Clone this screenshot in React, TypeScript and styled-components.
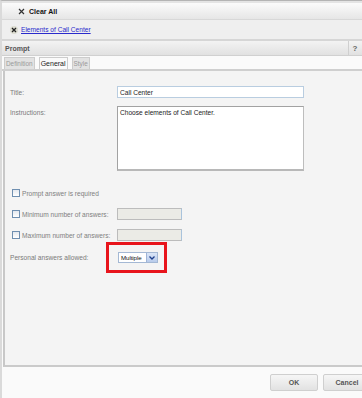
import styled, { createGlobalStyle } from "styled-components";

const GlobalStyle = createGlobalStyle`
  html, body {
    margin: 0;
    padding: 0;
    background: #ffffff;
  }
  body {
    font-family: "Liberation Sans", Arial, sans-serif;
    font-size: 6.6px;
  }
`;

const Frame = styled.div`
  width: 362px;
  height: 398px;
  overflow: hidden;
  box-sizing: border-box;
  border-top: 1px solid #b4b4b4;
  border-left: 2px solid #dadada;
  display: flex;
  flex-direction: column;
  background: #fafafa;
`;

const Toolbar = styled.div`
  height: 16px;
  display: flex;
  align-items: center;
  padding-left: 15px;
  gap: 4px;
  background: linear-gradient(#fbfbfb, #e6e6e6);
  border-top: 2px solid #e4e4e4;
  border-bottom: 1px solid #d8d8d8;
`;

const ClearText = styled.span`
  font-weight: bold;
  font-size: 7px;
  color: #111;
`;

const SquareX = styled.span`
  width: 8px;
  height: 8px;
  display: flex;
  align-items: center;
  justify-content: center;
`;

const SelectionRow = styled.div`
  height: 19px;
  display: flex;
  align-items: center;
  gap: 3px;
  padding-left: 8px;
  background: #efefef;
  border-bottom: 2px solid #d6d6d6;
`;

const RoundX = styled.span`
  width: 8px;
  height: 8px;
  border-radius: 50%;
  background: #dcdcd0;
  display: flex;
  align-items: center;
  justify-content: center;
`;

const Link = styled.a`
  color: #2a2acc;
  text-decoration: underline;
  cursor: pointer;
`;

const PromptHeader = styled.div`
  height: 14px;
  display: flex;
  align-items: center;
  justify-content: space-between;
  padding-left: 3px;
  background: linear-gradient(#f3f3f3, #e1e1e1);
  border-bottom: 1px solid #d0d0d0;
`;

const PromptTitle = styled.span`
  font-weight: bold;
  font-size: 7px;
  color: #555;
`;

const Help = styled.span`
  height: 100%;
  width: 12px;
  border-left: 1px solid #cfcfcf;
  display: flex;
  align-items: center;
  justify-content: center;
  font-weight: bold;
  font-size: 8px;
  color: #666;
  margin-right: 1px;
`;

const TabStrip = styled.div`
  height: 13px;
  display: flex;
  align-items: flex-end;
  gap: 4px;
  padding-left: 2px;
  background: #fafafa;
  border-bottom: 2px solid #cfcfcf;
`;

const Tab = styled.div<{ $active?: boolean }>`
  height: 12px;
  padding: 0 1px;
  display: flex;
  align-items: center;
  box-sizing: border-box;
  border: 1px solid #cccccc;
  border-bottom: none;
  background: ${(p) => (p.$active ? "#fafafa" : "#e2e2e2")};
  color: ${(p) => (p.$active ? "#222" : "#9a9a9a")};
  font-size: ${(p) => (p.$active ? "7px" : "6.4px")};
`;

const Panel = styled.div`
  height: 296px;
  margin-left: 1px;
  box-sizing: border-box;
  border-left: 2px solid #c8c8c8;
  border-bottom: 2px solid #cacaca;
  background: #f4f4f4;
  padding-top: 15px;
  display: flex;
  flex-direction: column;
`;

const Row = styled.div<{ $h: number; $mt?: number; $top?: boolean }>`
  height: ${(p) => p.$h}px;
  margin-top: ${(p) => p.$mt ?? 0}px;
  display: flex;
  align-items: ${(p) => (p.$top ? "flex-start" : "center")};
`;

const Label = styled.div<{ $pt?: number }>`
  width: 112px;
  flex: none;
  color: #7a7a7a;
  padding-top: ${(p) => p.$pt ?? 0}px;
  padding-left: 5px;
  box-sizing: border-box;
`;

const TextInput = styled.div`
  width: 187px;
  height: 12px;
  box-sizing: border-box;
  border: 1px solid #b9cde0;
  background: #ffffff;
  color: #222;
  padding-left: 2px;
  display: flex;
  align-items: center;
`;

const TextArea = styled.div`
  width: 187px;
  height: 65px;
  box-sizing: border-box;
  border: 1px solid #a2a2a2;
  border-right-color: #bdbdbd;
  border-bottom: 2px solid #b8b8b8;
  background: #ffffff;
  color: #222;
  padding: 2px 2px;
`;

const CheckLabel = styled.label`
  width: 112px;
  flex: none;
  display: flex;
  align-items: center;
  gap: 2px;
  padding-left: 7px;
  box-sizing: border-box;
  color: #808080;
  white-space: nowrap;
`;

const Box = styled.span`
  width: 8px;
  height: 8px;
  flex: none;
  box-sizing: border-box;
  border: 1px solid #6f8fb0;
  background: linear-gradient(#e4e8ee, #ffffff);
`;

const DisabledInput = styled.div`
  width: 65px;
  height: 12px;
  box-sizing: border-box;
  border: 1px solid #bcbcbc;
  border-right-color: #a9c3dc;
  background: #ebebe6;
`;

const Highlight = styled.div`
  position: relative;
  margin-left: 1px;
  display: flex;
  align-items: center;

  &::after {
    content: "";
    position: absolute;
    left: -12px;
    top: -10px;
    width: 61px;
    height: 31px;
    box-sizing: border-box;
    border: 3px solid #e8141c;
  }
`;

const Select = styled.div`
  width: 40px;
  height: 11px;
  box-sizing: border-box;
  border: 1px solid #a4b8d4;
  background: #ffffff;
  display: flex;
  align-items: center;
  justify-content: space-between;
  padding-left: 2px;
  color: #111;
  font-size: 6.2px;
  letter-spacing: -0.1px;
`;

const SelectArrow = styled.span`
  width: 10px;
  height: 9px;
  background: linear-gradient(#dbe6f7, #b8cbeb);
  border-left: 1px solid #9fb4d6;
  display: flex;
  align-items: center;
  justify-content: center;
`;

const Footer = styled.div`
  flex: 1;
  display: flex;
  justify-content: flex-end;
  align-items: flex-start;
  padding-top: 7px;
  gap: 5px;
  background: #fafafa;
`;

const Button = styled.button<{ $clip?: boolean }>`
  width: 48px;
  height: 17px;
  flex: none;
  margin-right: ${(p) => (p.$clip ? "-9px" : "0")};
  border: 1px solid #cfcfcf;
  border-radius: 2px;
  background: linear-gradient(#f6f6f6, #e2e2e2);
  font-family: "Liberation Sans", Arial, sans-serif;
  font-size: 7px;
  font-weight: bold;
  color: #555;
  padding: 0;
`;

export default function App() {
  return (
    <>
      <GlobalStyle />
      <Frame>
        <Toolbar>
          <SquareX>
            <svg width="7" height="7" viewBox="0 0 7 7">
              <path d="M1 1L6 6M6 1L1 6" stroke="#333" strokeWidth="1.2" />
            </svg>
          </SquareX>
          <ClearText>Clear All</ClearText>
        </Toolbar>
        <SelectionRow>
          <RoundX>
            <svg width="6" height="6" viewBox="0 0 6 6">
              <path d="M1 1L5 5M5 1L1 5" stroke="#222" strokeWidth="1.3" />
            </svg>
          </RoundX>
          <Link>Elements of Call Center</Link>
        </SelectionRow>
        <PromptHeader>
          <PromptTitle>Prompt</PromptTitle>
          <Help>?</Help>
        </PromptHeader>
        <TabStrip>
          <Tab>Definition</Tab>
          <Tab $active>General</Tab>
          <Tab>Style</Tab>
        </TabStrip>
        <Panel>
          <Row $h={12}>
            <Label>Title:</Label>
            <TextInput>Call Center</TextInput>
          </Row>
          <Row $h={65} $mt={8} $top>
            <Label $pt={3}>Instructions:</Label>
            <TextArea>Choose elements of Call Center.</TextArea>
          </Row>
          <Row $h={12} $mt={16}>
            <CheckLabel>
              <Box />
              Prompt answer is required
            </CheckLabel>
          </Row>
          <Row $h={12} $mt={9}>
            <CheckLabel>
              <Box />
              Minimum number of answers:
            </CheckLabel>
            <DisabledInput />
          </Row>
          <Row $h={12} $mt={9}>
            <CheckLabel>
              <Box />
              Maximum number of answers:
            </CheckLabel>
            <DisabledInput />
          </Row>
          <Row $h={11} $mt={11}>
            <Label>Personal answers allowed:</Label>
            <Highlight>
              <Select>
                Multiple
                <SelectArrow>
                  <svg width="6" height="4" viewBox="0 0 6 4">
                    <path d="M0.5 0.5L3 3L5.5 0.5" fill="none" stroke="#1d3f8c" strokeWidth="1.3" />
                  </svg>
                </SelectArrow>
              </Select>
            </Highlight>
          </Row>
        </Panel>
        <Footer>
          <Button>OK</Button>
          <Button $clip>Cancel</Button>
        </Footer>
      </Frame>
    </>
  );
}
